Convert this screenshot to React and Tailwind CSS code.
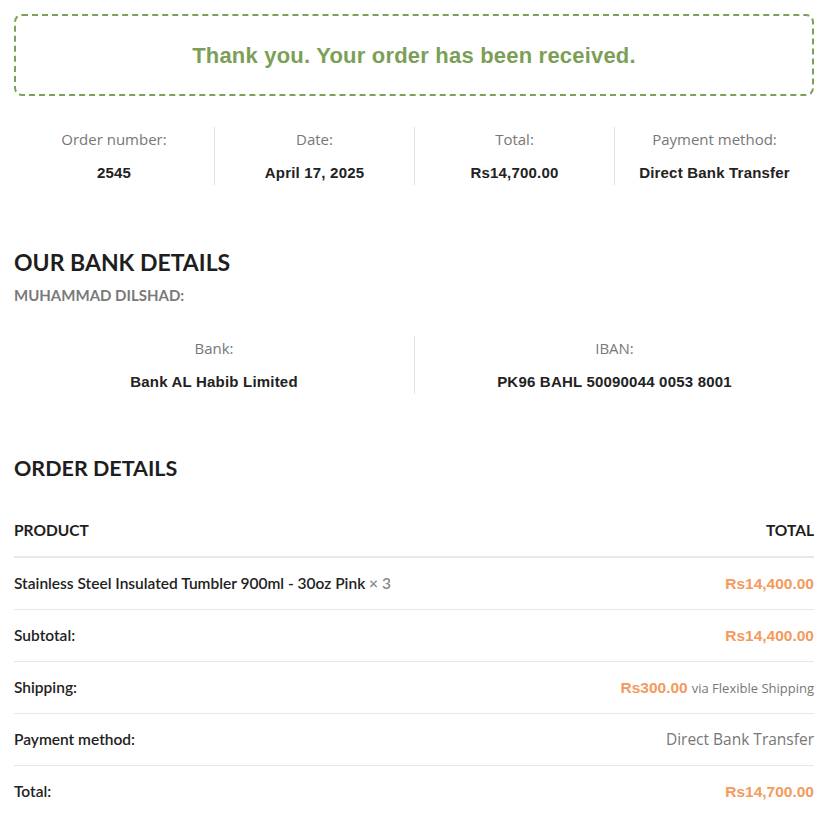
const body = { fontFamily: '"Liberation Sans", Arial, sans-serif' };
const light = { fontFamily: '"Open Sans", "Liberation Sans", sans-serif' };
const head = { fontFamily: 'Lato, "Liberation Sans", sans-serif' };

function Overview({ items, cols }) {
  return (
    <div className={`grid ${cols}`}>
      {items.map((it, i) => (
        <div
          key={it.label}
          className={`flex flex-col items-center py-[2px] ${i > 0 ? 'border-l border-[#e4e4e4]' : ''}`}
        >
          <span style={light} className="text-[15px] leading-[20px] text-[#777]">{it.label}</span>
          <span className="mt-[14px] text-[15px] leading-[20px] font-bold text-[#222] tracking-[0.2px]">{it.value}</span>
        </div>
      ))}
    </div>
  );
}

function Row({ label, children, first }) {
  return (
    <div
      className={`flex items-center justify-between ${first ? 'h-[53px] border-t-2' : 'h-[52px] border-t'} border-[#e8e8e8]`}
    >
      <span style={head} className="text-[15.5px] font-semibold text-[#222]">{label}</span>
      <div className="flex items-baseline gap-1">{children}</div>
    </div>
  );
}

function Price({ children }) {
  return (
    <span style={body} className="text-[15.5px] font-bold text-[#f39a5c]">{children}</span>
  );
}

export default function App() {
  return (
    <div style={body} className="bg-white min-h-screen pl-[14px] pr-[12px] pt-[14px] pb-6 w-full">
      <div className="h-[82px] rounded-lg border-2 border-dashed border-[#7ca05a] flex items-center justify-center">
        <p className="text-[22px] font-bold text-[#7c9f58] tracking-[0.2px]">Thank you. Your order has been received.</p>
      </div>

      <div className="mt-[31px]">
        <Overview
          cols="grid-cols-4"
          items={[
            { label: 'Order number:', value: '2545' },
            { label: 'Date:', value: 'April 17, 2025' },
            { label: 'Total:', value: 'Rs14,700.00' },
            { label: 'Payment method:', value: 'Direct Bank Transfer' },
          ]}
        />
      </div>

      <h2 style={head} className="mt-[62px] text-[23px] leading-[30px] font-bold text-[#1e1e1e]">
        OUR BANK DETAILS
      </h2>
      <h3 style={head} className="mt-[8px] text-[15px] leading-[20px] font-bold text-[#7a7a7a]">
        MUHAMMAD DILSHAD:
      </h3>

      <div className="mt-[31px]">
        <Overview
          cols="grid-cols-2"
          items={[
            { label: 'Bank:', value: 'Bank AL Habib Limited' },
            { label: 'IBAN:', value: 'PK96 BAHL 50090044 0053 8001' },
          ]}
        />
      </div>

      <h2 style={head} className="mt-[59px] text-[21.5px] leading-[30px] font-bold text-[#1e1e1e]">
        ORDER DETAILS
      </h2>

      <div className="mt-[22px]">
        <div className="flex items-center justify-between h-[51px]">
          <span style={head} className="text-[15.5px] font-bold text-[#1e1e1e]">PRODUCT</span>
          <span style={head} className="text-[15.5px] font-bold text-[#1e1e1e]">TOTAL</span>
        </div>
        <Row first label={<>Stainless Steel Insulated Tumbler 900ml - 30oz Pink <span className="text-[#888] font-semibold">× 3</span></>}>
          <Price>Rs14,400.00</Price>
        </Row>
        <Row label="Subtotal:">
          <Price>Rs14,400.00</Price>
        </Row>
        <Row label="Shipping:">
          <Price>Rs300.00</Price>
          <span style={light} className="text-[13px] text-[#777]">via Flexible Shipping</span>
        </Row>
        <Row label="Payment method:">
          <span style={light} className="text-[15.5px] text-[#777]">Direct Bank Transfer</span>
        </Row>
        <Row label="Total:">
          <Price>Rs14,700.00</Price>
        </Row>
      </div>
    </div>
  );
}
